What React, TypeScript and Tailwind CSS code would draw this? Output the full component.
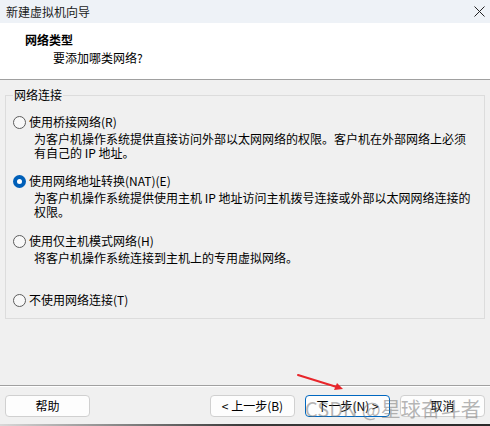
const font = { fontFamily: '"Noto Sans CJK SC", "Noto Sans", sans-serif' };

function Radio({ checked }: { checked?: boolean }) {
  return checked ? (
    <span className="w-[13px] h-[13px] rounded-full bg-[#005fb8] flex items-center justify-center shrink-0">
      <span className="w-[5px] h-[5px] rounded-full bg-white" />
    </span>
  ) : (
    <span className="w-[13px] h-[13px] rounded-full border border-[#5c5c5c] bg-[#f8f8f8] shrink-0" />
  );
}

function Option({
  label,
  desc,
  checked,
  className,
}: {
  label: string;
  desc?: string[];
  checked?: boolean;
  className?: string;
}) {
  return (
    <div className={className}>
      <div className="flex items-center gap-[3px] h-[16px] leading-[16px]">
        <Radio checked={checked} />
        <span>{label}</span>
      </div>
      {desc && (
        <div className="pl-[21px] mt-[2px] leading-[14px]">
          {desc.map((d) => (
            <div key={d}>{d}</div>
          ))}
        </div>
      )}
    </div>
  );
}

export default function App() {
  return (
    <div
      className="relative w-[490px] h-[426px] bg-[#f0f0f0] text-[12px] text-black flex flex-col overflow-hidden"
      style={font}
    >
      {/* title bar */}
      <div className="h-[23px] bg-[#eef2f7] flex items-center justify-between pl-[6px] pr-[6px]">
        <span className="text-[12px] text-[#1a1a1a]">新建虚拟机向导</span>
        <svg width="11" height="11" viewBox="0 0 11 11" className="mr-[-1px]">
          <path d="M0.5 0.5 L10.5 10.5 M10.5 0.5 L0.5 10.5" stroke="#222" strokeWidth="1" />
        </svg>
      </div>

      {/* header */}
      <div className="h-[57px] bg-white border-b border-[#a0a0a0] pl-[25px] pt-[9px]">
        <div className="font-bold leading-[16px]">网络类型</div>
        <div className="pl-[28px] mt-[2px] leading-[16px]">要添加哪类网络?</div>
      </div>

      {/* body */}
      <div className="flex-1 px-[5px] pt-[7px]">
        <fieldset className="border border-[#dcdcdc] h-[232px] pl-[7px] pr-[6px]">
          <legend className="px-[1px] leading-[16px]">网络连接</legend>
          <Option
            className="mt-[11px]"
            label="使用桥接网络(R)"
            desc={[
              '为客户机操作系统提供直接访问外部以太网网络的权限。客户机在外部网络上必须',
              '有自己的 IP 地址。',
            ]}
          />
          <Option
            className="mt-[13px]"
            checked
            label="使用网络地址转换(NAT)(E)"
            desc={[
              '为客户机操作系统提供使用主机 IP 地址访问主机拨号连接或外部以太网网络连接的',
              '权限。',
            ]}
          />
          <Option
            className="mt-[14px]"
            label="使用仅主机模式网络(H)"
            desc={['将客户机操作系统连接到主机上的专用虚拟网络。']}
          />
          <Option className="mt-[27px]" label="不使用网络连接(T)" />
        </fieldset>
      </div>

      {/* footer */}
      <div className="border-t border-[#a0a0a0] shadow-[inset_0_1px_0_#ffffff] h-[39px] px-[5px] pt-[9px] flex items-start">
        <button className="w-[85px] h-[22px] rounded-[4px] border border-[#d0d0d0] bg-[#fdfdfd] leading-[20px]">
          帮助
        </button>
        <div className="ml-auto flex gap-[10px]">
          <button className="w-[85px] h-[22px] rounded-[4px] border border-[#d0d0d0] bg-[#fdfdfd] leading-[20px]">
            &lt; 上一步(B)
          </button>
          <button className="w-[85px] h-[22px] rounded-[4px] border border-[#0067c0] bg-[#fdfdfd] leading-[20px]">
            下一步(N) &gt;
          </button>
          <button className="w-[85px] h-[22px] rounded-[4px] border border-[#d0d0d0] bg-[#fdfdfd] leading-[20px]">
            取消
          </button>
        </div>
      </div>

      {/* window shadow edge */}
      <div className="h-[2px] bg-gradient-to-r from-[#d8d8d8] via-[#3a3a3a] to-[#2a2a2a]" />

      {/* annotation arrow */}
      <svg className="absolute left-[296px] top-[372px]" width="52" height="22" viewBox="0 0 52 22">
        <path d="M2 3 L44 16" stroke="#e8262b" strokeWidth="2" strokeLinecap="round" />
        <path d="M47 17 L38 18 L41 11 Z" fill="#e8262b" />
      </svg>

      {/* watermark */}
      <div className="absolute left-[305px] top-[397px] text-[20px] leading-[24px] text-[#6e6e6e]/50 whitespace-nowrap pointer-events-none">
        CSDN @星球奋斗者
      </div>
    </div>
  );
}
